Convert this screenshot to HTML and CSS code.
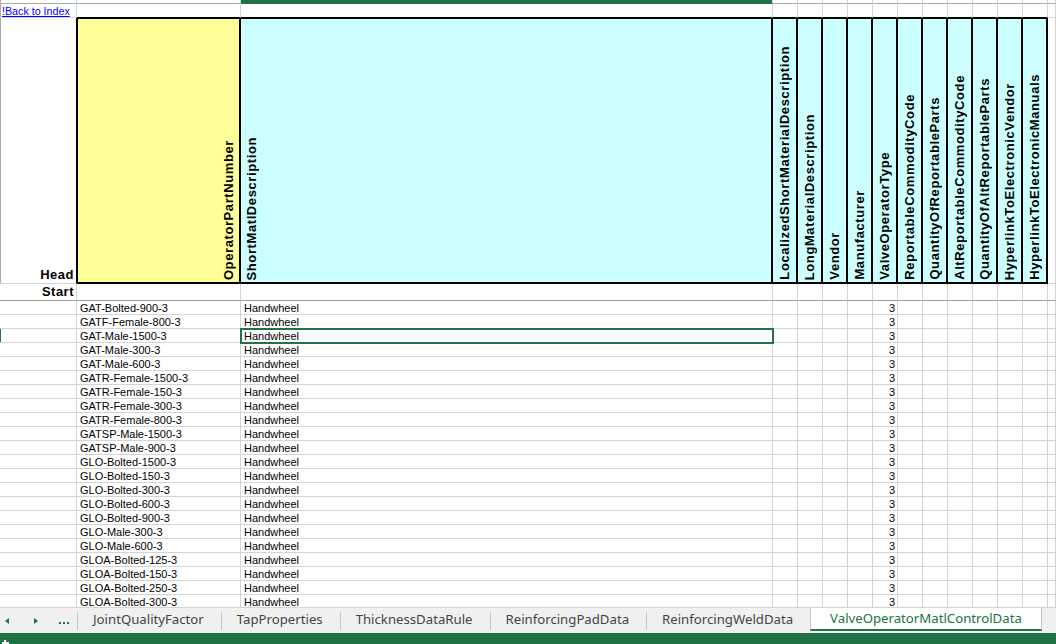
FILE: index.html
```html
<!DOCTYPE html>
<html lang="en">
<head>
  <meta charset="UTF-8" />
  <meta name="viewport" content="width=device-width, initial-scale=1.0"/>
  <title>ValveOperatorMatlControlData</title>
  <link rel="stylesheet" href="styles.css">
</head>
<body>
  <div class="app">
    <div class="sheet">
      <div class="grid">
        <!-- column header edge -->
        <div class="top edge"></div><div class="top"></div><div class="top on"></div><div class="top"></div><div class="top"></div><div class="top"></div><div class="top"></div><div class="top"></div><div class="top"></div><div class="top"></div><div class="top"></div><div class="top"></div><div class="top"></div><div class="top"></div><div class="top"></div>

        <!-- row 1 -->
        <div class="link edge"><a href="#">!Back to Index</a></div><div class="ab"></div><div class="ab"></div><div class="ab"></div><div class="ab"></div><div class="ab"></div><div class="ab"></div><div class="ab"></div><div class="ab"></div><div class="ab"></div><div class="ab"></div><div class="ab"></div><div class="ab"></div><div class="ab"></div><div></div>

        <!-- header row -->
        <div class="lbl hl edge">Head</div>
        <div class="hd part"><span class="vt">OperatorPartNumber</span></div>
        <div class="hd desc"><span class="vt">ShortMatlDescription</span></div>
        <div class="hd"><span class="vt">LocalizedShortMaterialDescription</span></div>
        <div class="hd"><span class="vt">LongMaterialDescription</span></div>
        <div class="hd"><span class="vt">Vendor</span></div>
        <div class="hd"><span class="vt">Manufacturer</span></div>
        <div class="hd"><span class="vt">ValveOperatorType</span></div>
        <div class="hd"><span class="vt">ReportableCommodityCode</span></div>
        <div class="hd"><span class="vt">QuantityOfReportableParts</span></div>
        <div class="hd"><span class="vt">AltReportableCommodityCode</span></div>
        <div class="hd"><span class="vt">QuantityOfAltReportableParts</span></div>
        <div class="hd"><span class="vt">HyperlinkToElectronicVendor</span></div>
        <div class="hd"><span class="vt">HyperlinkToElectronicManuals</span></div>
        <div></div>

        <!-- start row -->
        <div class="lbl fz">Start</div><div class="fz"></div><div class="fz"></div><div class="fz"></div><div class="fz"></div><div class="fz"></div><div class="fz"></div><div class="fz"></div><div class="fz"></div><div class="fz"></div><div class="fz"></div><div class="fz"></div><div class="fz"></div><div class="fz"></div><div class="fz"></div>

        <!-- data -->
        <div></div><div>GAT-Bolted-900-3</div><div>Handwheel</div><div></div><div></div><div></div><div></div><div class="num">3</div><div></div><div></div><div></div><div></div><div></div><div></div><div></div>
        <div></div><div>GATF-Female-800-3</div><div>Handwheel</div><div></div><div></div><div></div><div></div><div class="num">3</div><div></div><div></div><div></div><div></div><div></div><div></div><div></div>
        <div class="cur"></div><div>GAT-Male-1500-3</div><div class="sel">Handwheel</div><div></div><div></div><div></div><div></div><div class="num">3</div><div></div><div></div><div></div><div></div><div></div><div></div><div></div>
        <div></div><div>GAT-Male-300-3</div><div>Handwheel</div><div></div><div></div><div></div><div></div><div class="num">3</div><div></div><div></div><div></div><div></div><div></div><div></div><div></div>
        <div></div><div>GAT-Male-600-3</div><div>Handwheel</div><div></div><div></div><div></div><div></div><div class="num">3</div><div></div><div></div><div></div><div></div><div></div><div></div><div></div>
        <div></div><div>GATR-Female-1500-3</div><div>Handwheel</div><div></div><div></div><div></div><div></div><div class="num">3</div><div></div><div></div><div></div><div></div><div></div><div></div><div></div>
        <div></div><div>GATR-Female-150-3</div><div>Handwheel</div><div></div><div></div><div></div><div></div><div class="num">3</div><div></div><div></div><div></div><div></div><div></div><div></div><div></div>
        <div></div><div>GATR-Female-300-3</div><div>Handwheel</div><div></div><div></div><div></div><div></div><div class="num">3</div><div></div><div></div><div></div><div></div><div></div><div></div><div></div>
        <div></div><div>GATR-Female-800-3</div><div>Handwheel</div><div></div><div></div><div></div><div></div><div class="num">3</div><div></div><div></div><div></div><div></div><div></div><div></div><div></div>
        <div></div><div>GATSP-Male-1500-3</div><div>Handwheel</div><div></div><div></div><div></div><div></div><div class="num">3</div><div></div><div></div><div></div><div></div><div></div><div></div><div></div>
        <div></div><div>GATSP-Male-900-3</div><div>Handwheel</div><div></div><div></div><div></div><div></div><div class="num">3</div><div></div><div></div><div></div><div></div><div></div><div></div><div></div>
        <div></div><div>GLO-Bolted-1500-3</div><div>Handwheel</div><div></div><div></div><div></div><div></div><div class="num">3</div><div></div><div></div><div></div><div></div><div></div><div></div><div></div>
        <div></div><div>GLO-Bolted-150-3</div><div>Handwheel</div><div></div><div></div><div></div><div></div><div class="num">3</div><div></div><div></div><div></div><div></div><div></div><div></div><div></div>
        <div></div><div>GLO-Bolted-300-3</div><div>Handwheel</div><div></div><div></div><div></div><div></div><div class="num">3</div><div></div><div></div><div></div><div></div><div></div><div></div><div></div>
        <div></div><div>GLO-Bolted-600-3</div><div>Handwheel</div><div></div><div></div><div></div><div></div><div class="num">3</div><div></div><div></div><div></div><div></div><div></div><div></div><div></div>
        <div></div><div>GLO-Bolted-900-3</div><div>Handwheel</div><div></div><div></div><div></div><div></div><div class="num">3</div><div></div><div></div><div></div><div></div><div></div><div></div><div></div>
        <div></div><div>GLO-Male-300-3</div><div>Handwheel</div><div></div><div></div><div></div><div></div><div class="num">3</div><div></div><div></div><div></div><div></div><div></div><div></div><div></div>
        <div></div><div>GLO-Male-600-3</div><div>Handwheel</div><div></div><div></div><div></div><div></div><div class="num">3</div><div></div><div></div><div></div><div></div><div></div><div></div><div></div>
        <div></div><div>GLOA-Bolted-125-3</div><div>Handwheel</div><div></div><div></div><div></div><div></div><div class="num">3</div><div></div><div></div><div></div><div></div><div></div><div></div><div></div>
        <div></div><div>GLOA-Bolted-150-3</div><div>Handwheel</div><div></div><div></div><div></div><div></div><div class="num">3</div><div></div><div></div><div></div><div></div><div></div><div></div><div></div>
        <div></div><div>GLOA-Bolted-250-3</div><div>Handwheel</div><div></div><div></div><div></div><div></div><div class="num">3</div><div></div><div></div><div></div><div></div><div></div><div></div><div></div>
        <div></div><div>GLOA-Bolted-300-3</div><div>Handwheel</div><div></div><div></div><div></div><div></div><div class="num">3</div><div></div><div></div><div></div><div></div><div></div><div></div><div></div>
      </div>
    </div>

    <div class="tabbar">
      <div class="nav">
        <span class="arrow prev"></span>
        <span class="arrow next"></span>
        <span class="dots"><i></i><i></i><i></i></span>
      </div>
      <span class="sep"></span>
      <div class="tab">JointQualityFactor</div>
      <span class="sep"></span>
      <div class="tab">TapProperties</div>
      <span class="sep"></span>
      <div class="tab">ThicknessDataRule</div>
      <span class="sep"></span>
      <div class="tab">ReinforcingPadData</div>
      <span class="sep"></span>
      <div class="tab">ReinforcingWeldData</div>
      <div class="tab active">ValveOperatorMatlControlData</div>
    </div>

    <div class="status">
      <svg class="status-icon" width="10" height="10" viewBox="0 0 10 10">
        <rect x="1" y="3" width="7" height="2" fill="#fff"/>
        <rect x="3" y="1" width="2" height="8" fill="#fff"/>
      </svg>
    </div>
  </div>
</body>
</html>
```

FILE: styles.css
```css
* {
  box-sizing: border-box;
}
body {
  margin: 0;
  overflow: hidden;
  font-family: "Liberation Sans", Arial, sans-serif;
  background: #fff;
}
.app {
  width: 1056px;
  height: 644px;
  display: flex;
  flex-direction: column;
  overflow: hidden;
}

/* sheet grid */
.sheet {
  height: 607px;
  flex: none;
  overflow: hidden;
}
.grid {
  display: grid;
  width: 1056px;
  grid-template-columns: 77px 164px 532px repeat(11, 25px) 8px;
  grid-template-rows: 4px 14px 266px 17px repeat(22, 14px);
  font-size: 11px;
  color: #000;
}
.grid > div {
  border-right: 1px solid #d4d4d4;
  border-bottom: 1px solid #d4d4d4;
  padding: 1px 3px 0;
  line-height: 12px;
  white-space: nowrap;
  overflow: hidden;
}
.grid > .top {
  padding: 0;
  border-bottom-color: #ababab;
}
.grid > .top.on {
  background: #217346;
  border-bottom-color: #217346;
}
.grid > .edge {
  box-shadow: inset 1px 0 #ababab;
}
.grid > .link {
  padding-left: 2px;
  font-size: 10.7px;
}
.link a {
  color: #0000ff;
  text-decoration: underline;
}
.grid > .ab {
  border-bottom-color: #000;
}
.grid > .fz {
  border-bottom-color: #a0a0a0;
}
.grid > .lbl {
  display: flex;
  align-items: flex-end;
  justify-content: flex-end;
  padding: 0 2px 1px 0;
  font-size: 13px;
  font-weight: bold;
  line-height: 15px;
  letter-spacing: 0.5px;
}
.grid > .hl {
  border-right-color: #000;
}

/* header block */
.grid > .hd {
  display: flex;
  align-items: flex-end;
  justify-content: center;
  padding: 0 0 2px;
  background: #ccffff;
  border-top: 1px solid #000;
  border-right: 2px solid #000;
  border-bottom: 2px solid #000;
}
.grid > .hd.part {
  background: #ffff99;
  border-left: 1px solid #000;
  justify-content: flex-end;
  padding-right: 3px;
}
.grid > .hd.desc {
  justify-content: flex-start;
  padding-left: 3px;
}
.vt {
  writing-mode: vertical-rl;
  transform: rotate(180deg);
  font-size: 13px;
  font-weight: bold;
  line-height: 15px;
  letter-spacing: 0.6px;
  white-space: nowrap;
}

/* data cells */
.grid > .num {
  text-align: right;
  padding-right: 2px;
}
.grid > .cur {
  box-shadow: inset 1px 0 #217346;
}
.grid > .sel {
  position: relative;
  z-index: 1;
  outline: 2px solid #217346;
  outline-offset: -1px;
}

/* sheet tabs */
.tabbar {
  height: 26px;
  flex: none;
  display: flex;
  align-items: center;
  border-top: 1px solid #d4d4d4;
  background: #f0f0f0;
  font-family: "Noto Sans", "Liberation Sans", sans-serif;
  font-size: 13.2px;
  color: #444;
}
.nav {
  width: 77px;
  height: 100%;
  display: flex;
  align-items: center;
}
.arrow {
  width: 0;
  height: 0;
  border-top: 3px solid transparent;
  border-bottom: 3px solid transparent;
}
.arrow.prev {
  border-right: 4px solid #217346;
  margin-left: 5px;
}
.arrow.next {
  border-left: 4px solid #217346;
  margin-left: 25px;
}
.dots {
  display: flex;
  gap: 2px;
  margin-left: 21px;
  margin-top: 5px;
}
.dots i {
  width: 2px;
  height: 2px;
  background: #217346;
}
.sep {
  width: 1px;
  height: 18px;
  background: #c6c6c6;
}
.tab {
  padding: 0 17px 3px 15px;
  line-height: 22px;
  white-space: nowrap;
}
.tab.active {
  align-self: flex-start;
  padding: 0 19px 1px;
  line-height: 20px;
  background: #fff;
  color: #217346;
  border-left: 1px solid #c6c6c6;
  border-right: 1px solid #c6c6c6;
  border-bottom: 2px solid #217346;
}

/* status bar */
.status {
  flex: 1;
  background: #217346;
  overflow: hidden;
}
.status-icon {
  display: block;
  margin: 6px 0 0 1px;
}
```
